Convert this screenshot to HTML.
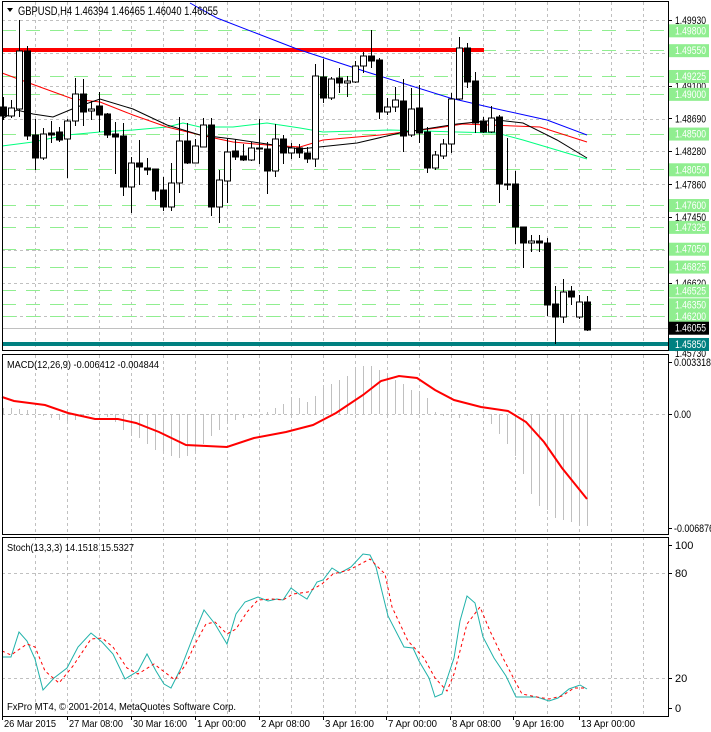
<!DOCTYPE html>
<html><head><meta charset="utf-8"><style>
html,body{margin:0;padding:0;background:#fff;width:711px;height:732px;overflow:hidden}
svg{display:block;font-family:"Liberation Sans",sans-serif;font-size:11px}
</style></head><body>
<svg id="s" width="711" height="732" xmlns="http://www.w3.org/2000/svg"></svg>
<script>
const S=document.getElementById('s');let h='';
const Y=p=>20+(1.4993-p)*7941;
for(let x=35;x<668;x+=32){[[2,350],[355,534],[537,716]].forEach(([a,b])=>{h+=`<line x1="${x+.5}" y1="${a}" x2="${x+.5}" y2="${b}" stroke="#c0c0c0" stroke-dasharray="3,3"/>`;});}
[20,53,86,118.5,151,184,217,250,283,316].forEach(y=>{h+=`<line x1="2" y1="${Math.round(y)+.5}" x2="668" y2="${Math.round(y)+.5}" stroke="#c0c0c0" stroke-dasharray="3,3"/>`;});
const G=[1.498,1.4955,1.49225,1.49,1.485,1.4805,1.476,1.47325,1.4705,1.46825,1.46525,1.4635,1.462];
G.forEach(p=>{const y=Math.round(Y(p))+.5;h+=`<line x1="2" y1="${y}" x2="668" y2="${y}" stroke="#90ee90" stroke-dasharray="14,10"/>`;});
h+=`<line x1="2" y1="328.5" x2="668" y2="328.5" stroke="#c0c0c0"/>`;
h+=`<rect x="2" y="48" width="482" height="4" fill="#ff0000"/>`;
h+=`<rect x="2" y="342" width="666" height="4" fill="#008080"/>`;
const pl=(pts,c,w,extra='')=>{h+=`<polyline fill="none" stroke="${c}" stroke-width="${w}" ${extra} points="${pts.map(p=>p.join(',')).join(' ')}"/>`;};
pl([[2,146],[33,142],[67,135],[100,132],[133,130],[167,127],[183,123],[200,127],[233,127],[267,123],[300,128],[323,132],[390,130],[457,132],[497,133],[523,140],[587,159]],'#00ff7f',1);
pl([[2,73],[40,87],[73,99],[100,102],[133,115],[167,127],[200,135],[233,142],[267,145],[300,147],[323,140],[380,135],[437,128],[463,124],[540,127],[587,142]],'#ff0000',1);
pl([[2,119],[17,110],[33,114],[53,117],[77,107],[100,99],[133,109],[167,125],[200,135],[233,139],[267,144],[300,149],[357,143],[400,133],[457,124],[497,120],[523,123],[557,140],[587,158]],'#000',1);
pl([[190,3],[217,18],[297,49],[367,72],[450,98],[497,109],[547,120],[587,135]],'#0000ff',1);
const C=[[107,116,97,120],[116,108,100,118],[109,51,20,117],[51,136,46,140],[135,158,119,170],[158,134,128,160],[133,135,121,143],[132,140,127,142],[139,121,119,178],[121,94,78,126],[94,112,79,126],[111,109,101,120],[106,115,92,132],[114,135,113,138],[134,137,122,174],[136,187,123,196],[187,163,157,213],[163,167,140,185],[168,170,158,175],[169,191,169,200],[190,207,177,211],[207,183,163,211],[183,141,117,193],[141,163,123,164],[163,146,139,163],[147,125,118,147],[125,207,118,216],[207,180,170,223],[181,152,138,203],[151,157,139,160],[156,160,144,161],[160,148,142,161],[148,149,119,164],[149,171,142,194],[171,139,124,177],[139,153,135,164],[153,148,143,159],[148,153,144,158],
[153,159,147,163],[159,76,64,167],[77,98,59,103],[98,79,77,100],[78,83,68,93],[83,81,76,97],[82,66,61,83],[66,56,52,73],[56,61,30,68],[60,112,58,119],[112,107,98,115],[107,100,87,112],[101,136,79,152],[135,109,88,137],[108,133,85,143],[132,168,127,173],[168,155,151,170],[156,144,139,159],[144,99,93,153],[99,48,37,100],[48,82,43,88],[81,123,72,133],[121,132,117,133],[132,118,106,133],[117,184,115,203],[184,185,138,190],[184,227,171,244],[227,243,227,268],[243,241,235,252],[241,243,235,252],[243,305,238,316],[304,317,286,344],[317,292,279,323],[291,297,286,305],[317,302,295,319],[302,330,296,331]];
C.forEach((c,i)=>{const x=3+8*i+.5;const[o,cl,hi,lo]=c;const t=Math.min(o,cl),b=Math.max(o,cl);
h+=`<line x1="${x}" y1="${hi}" x2="${x}" y2="${lo}" stroke="#000"/>`;
const bull=cl<o;h+=`<rect x="${x-3}" y="${t}" width="6" height="${Math.max(b-t,1)}" fill="${bull?'#fff':'#000'}" stroke="#000"/>`;});
h+=`<line x1="2" y1="414.5" x2="668" y2="414.5" stroke="#c0c0c0" stroke-dasharray="3,3"/>`;
const M=[-6,-6,-5,-4,-2,2,4,6,8,6,2,-1,0,3,8,16,20,24,30,36,40,42,44,42,38,30,22,16,10,6,4,2,0,-2,-6,-10,-14,-16,-12,-18,-26,-30,-34,-38,-44,-48,-48,-44,-40,-34,-30,-24,-20,-16,-2,2,4,4,2,0,4,10,20,30,42,60,80,92,96,104,106,108,110,112];
M.forEach((v,i)=>{const x=3+8*i+.5;h+=`<line x1="${x}" y1="414" x2="${x}" y2="${414+v}" stroke="#c0c0c0"/>`;});
pl([[2,397],[14,401],[45,405],[68,413],[95,419],[118,419],[136,423],[159,432],[186,445],[227,447],[254,438],[286,432],[313,425],[336,413],[363,395],[381,381],[399,376],[417,378],[435,390],[454,400],[481,407],[508,411],[526,422],[544,442],[562,468],[587,499]],'#ff0000',2);
[573.5,678.5].forEach(y=>{h+=`<line x1="2" y1="${y}" x2="668" y2="${y}" stroke="#c0c0c0" stroke-dasharray="3,3"/>`;});
pl([[2,657],[11,657],[19,632],[27,641],[35,659],[43,690],[54,678],[67,668],[78,647],[91,633],[102,642],[113,654],[125,679],[138,671],[147,654],[156,671],[164,684],[171,688],[181,668],[193,637],[204,610],[215,624],[227,644],[236,614],[245,602],[258,597],[268,601],[277,599],[283,600],[291,588],[299,594],[307,599],[317,582],[323,580],[332,568],[340,573],[351,567],[363,554],[370,555],[376,567],[388,616],[404,647],[413,648],[419,661],[429,678],[435,697],[442,694],[454,658],[460,621],[467,596],[475,603],[483,637],[494,658],[506,676],[516,697],[537,697],[549,701],[558,698],[569,689],[580,685],[587,689]],'#20b2aa',1);
pl([[2,651],[11,655],[27,644],[35,647],[45,671],[59,683],[73,666],[91,639],[102,638],[113,647],[127,668],[138,674],[154,664],[175,680],[186,664],[195,644],[206,624],[215,622],[227,634],[236,629],[247,612],[258,600],[272,599],[283,600],[293,594],[308,592],[322,584],[333,574],[349,570],[370,559],[385,574],[392,607],[408,641],[424,658],[435,678],[447,691],[454,674],[467,624],[480,607],[490,631],[503,658],[515,681],[522,694],[537,697],[549,699],[562,696],[574,688],[585,688]],'#ff0000',1,'stroke-dasharray="3,3"');
[[2,1,666,349],[2,354,666,180],[2,537,666,179]].forEach(([x,y,w,hh])=>{h+=`<rect x="${x+.5}" y="${y+.5}" width="${w}" height="${hh}" fill="none" stroke="#000"/>`;});
const L='textLength="31" lengthAdjust="spacingAndGlyphs"';
const B=[[1.4993,'1.49930'],[1.491,'1.49100'],[1.4869,'1.48690'],[1.4828,'1.48280'],[1.4786,'1.47860'],[1.4745,'1.47450'],[1.4662,'1.46620']];
B.forEach(([p,t])=>{const y=Y(p);h+=`<line x1="668" y1="${Math.round(y)+.5}" x2="672" y2="${Math.round(y)+.5}" stroke="#000"/><text x="675" y="${y+4}" fill="#000" ${L}>${t}</text>`;});
h+=`<text x="675" y="357" fill="#000" ${L}>1.45730</text>`;
G.forEach(p=>{const y=Y(p);h+=`<rect x="669" y="${y-6}" width="40" height="13" fill="#90ee90"/><text x="675" y="${y+4}" fill="#fff" ${L}>${p.toFixed(5)}</text>`;});
h+=`<rect x="669" y="${Y(1.46055)-6}" width="40" height="13" fill="#000"/><text x="675" y="${Y(1.46055)+4}" fill="#fff" ${L}>1.46055</text>`;
h+=`<rect x="669" y="${Y(1.4585)-6}" width="40" height="13" fill="#008080"/><text x="675" y="${Y(1.4585)+4}" fill="#fff" ${L}>1.45850</text>`;
[[362,'0.003318',37],[414,'0.00',17],[528,'-0.006876',40]].forEach(([y,t,w])=>{h+=`<line x1="668" y1="${y+.5}" x2="672" y2="${y+.5}" stroke="#000"/><text x="674" y="${y+4}" textLength="${w}" lengthAdjust="spacingAndGlyphs">${t}</text>`;});
[[545,'100'],[573,'80'],[678,'20'],[708,'0']].forEach(([y,t])=>{h+=`<line x1="668" y1="${y+.5}" x2="672" y2="${y+.5}" stroke="#000"/><text x="675" y="${y+4}">${t}</text>`;});
h+=`<polygon points="7,8 13,8 10,12" fill="#000"/><text x="18" y="15" fill="#000" font-size="12" textLength="200" lengthAdjust="spacingAndGlyphs">GBPUSD,H4  1.46394 1.46465 1.46040 1.46055</text>`;
h+=`<text x="7" y="368" font-size="10.5" textLength="152" lengthAdjust="spacingAndGlyphs">MACD(12,26,9) -0.006412 -0.004844</text>`;
h+=`<text x="7" y="551" font-size="10.5" textLength="127" lengthAdjust="spacingAndGlyphs">Stoch(13,3,3) 14.1518 15.5327</text>`;
h+=`<text x="7" y="710" font-size="10.5" textLength="229" lengthAdjust="spacingAndGlyphs">FxPro MT4, © 2001-2014, MetaQuotes Software Corp.</text>`;
[[2,'26 Mar 2015',52],[67,'27 Mar 08:00',54],[131,'30 Mar 16:00',54],[195,'1 Apr 00:00',49],[259,'2 Apr 08:00',49],[323,'3 Apr 16:00',49],[386,'7 Apr 00:00',49],[450,'8 Apr 08:00',49],[513,'9 Apr 16:00',49],[579,'13 Apr 00:00',54]].forEach(([x,t,w])=>{h+=`<line x1="${x+.5}" y1="716" x2="${x+.5}" y2="720" stroke="#000"/><text x="${x+2}" y="727" font-size="10.5" textLength="${w}" lengthAdjust="spacingAndGlyphs">${t}</text>`;});
S.innerHTML=h;
</script>
</body></html>
